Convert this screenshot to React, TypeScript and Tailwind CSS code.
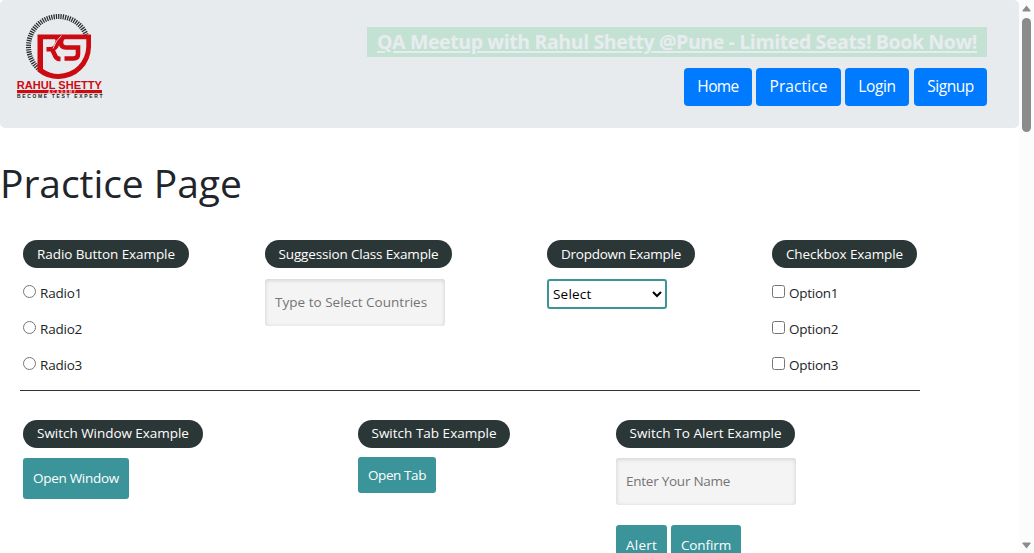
import React from "react";

function Logo() {
  return (
    <svg width="90" height="90" viewBox="15 12 90 90" className="block">
      <path d="M38.200 68.500A30 30 0 0 1 28.500 46.500A30 30 0 0 1 58.500 16.500A30 30 0 0 1 86.200 34.800" fill="none" stroke="#2a2a2a" strokeWidth="5" strokeDasharray="1.250 1.050" />
      <path d="M91 34.600H37.500V71.500A32.500 32.500 0 0 0 58.500 79A32.500 32.500 0 0 0 91 46.500ZM86.300 39.300V46.500A28 28 0 0 1 58.500 74A28 28 0 0 1 43 69V39.300Z" fill="#cc0a12" fillRule="evenodd" />
      <path d="M55 37.500H58.500L57.300 43Q56 49 51 49.200H46.500M52.500 50L55.500 56.500Q57 59 60.500 59" fill="none" stroke="#cc0a12" strokeWidth="4.600" />
      <path d="M64 37.500Q61 38 61 42.500Q61 47.500 66 47.500H78V54Q78 58.500 73.500 58.500H64.500" fill="none" stroke="#cc0a12" strokeWidth="4.600" />
      <path d="M61.500 35.500Q56 40 53 48.500" fill="none" stroke="#e8ebee" strokeWidth=".9" />
      <text x="16.800" y="89" textLength="85.200" lengthAdjust="spacingAndGlyphs" fill="#cc0a12" fontFamily="Liberation Sans, sans-serif" fontWeight="700" fontSize="10.800">RAHUL SHETTY</text>
      <rect x="17" y="90" width="85" height="3.200" fill="#cc0a12" />
      <text x="48" y="93" textLength="28" fill="#f3d5d7" fontFamily="Liberation Sans, sans-serif" fontWeight="700" fontSize="3.600">ACADEMY</text>
      <text x="17" y="98.200" textLength="85.500" fill="#222" fontFamily="Liberation Sans, sans-serif" fontWeight="700" fontSize="5">BECOME TEST EXPERT</text>
    </svg>
  );
}

function Pill({ children, className }: { children: React.ReactNode; className: string }) {
  return (
    <div className={`flex h-7 items-center justify-center whitespace-nowrap rounded-full bg-[#2b3636] text-white ${className}`}>
      <span>{children}</span>
    </div>
  );
}

function Choice({ type, label, className }: { type: "radio" | "checkbox"; label: string; className: string }) {
  return (
    <label className="flex h-9 items-start">
      <input type={type} name={type === "radio" ? "radioButton" : label} className="m-0 mt-[1px] h-[13px] w-[13px] shrink-0" />
      <span className={`ml-1 mt-[-1px] leading-5 ${className}`}>{label}</span>
    </label>
  );
}

const field =
  "block h-[47px] w-[180px] rounded-[3px] border-0 bg-[#f4f4f4] px-[10px] pb-0.5 shadow-[inset_0_1px_4px_rgba(0,0,0,0.16)] placeholder:text-[#757575] placeholder:opacity-100 outline-none";
const navButton = "flex h-[38px] items-center justify-center rounded bg-[#007bff] pb-px text-[15.5px] text-white";
const action = "flex items-center justify-center whitespace-nowrap rounded-[3px] bg-[#3a9499] text-white";

export default function App() {
  return (
    <div className="flex h-[553px] w-[1034px] overflow-hidden bg-white font-['Open_Sans','Noto_Sans',sans-serif] text-[13.5px] font-medium text-[#212529]">
      <div className="h-full w-[1019px] overflow-hidden">
        <header className="flex h-32 items-start justify-between rounded-[5px] bg-[#e8ebee] pl-[15px] pr-8 pt-3">
          <Logo />
          <div className="flex flex-col items-end pt-[15px]">
            <a href="#" className="flex h-[30px] w-[620px] items-center justify-center whitespace-nowrap bg-[#c4e2d4] text-[19.5px] font-bold tracking-[-0.38px] text-[#e9ecef] underline decoration-2 underline-offset-2">
              QA Meetup with Rahul Shetty @Pune - Limited Seats! Book Now!
            </a>
            <nav className="mt-[11px] flex">
              <button className={`${navButton} w-[68px] tracking-[-0.6px]`}>Home</button>
              <button className={`${navButton} ml-1 w-[85px] tracking-[0.1px]`}>Practice</button>
              <button className={`${navButton} ml-1 w-16 tracking-[-0.35px]`}>Login</button>
              <button className={`${navButton} ml-[5px] w-[73px] tracking-[-0.5px]`}>Signup</button>
            </nav>
          </div>
        </header>

        <h1 className="mt-8 h-12 whitespace-nowrap text-[39px] font-normal leading-[46px] tracking-[-0.05px]">Practice Page</h1>

        <main className="ml-5 mt-8 w-[900px]">
          <section className="flex h-[151px] border-b border-[#2b3636] pl-[3px]">
            <div className="w-[242px]">
              <Pill className="w-[166px] tracking-[-0.08px]">Radio Button Example</Pill>
              <div className="mt-4">
                {["Radio1", "Radio2", "Radio3"].map((l) => (
                  <Choice key={l} type="radio" label={l} className="tracking-[-0.2px]" />
                ))}
              </div>
            </div>
            <div className="w-[282px]">
              <Pill className="w-[187px] tracking-[-0.16px]">Suggession Class Example</Pill>
              <input className={`${field} mt-[11px] tracking-[0.02px]`} placeholder="Type to Select Countries" />
            </div>
            <div className="w-[225px]">
              <Pill className="w-[148px] tracking-[-0.26px]">Dropdown Example</Pill>
              <select className="mt-[11px] block h-[30px] w-[120px] rounded-[3px] border-2 border-[#3a9499] bg-white pb-px tracking-[0.2px] text-black">
                <option>Select</option>
                <option>Option1</option>
                <option>Option2</option>
                <option>Option3</option>
              </select>
            </div>
            <div>
              <Pill className="w-[145px] tracking-[-0.1px]">Checkbox Example</Pill>
              <div className="mt-4">
                {["Option1", "Option2", "Option3"].map((l) => (
                  <Choice key={l} type="checkbox" label={l} className="tracking-[-0.27px]" />
                ))}
              </div>
            </div>
          </section>

          <section className="flex pl-[3px] pt-[29px]">
            <div className="w-[335px]">
              <Pill className="w-[180px] pb-px tracking-[-0.04px]">Switch Window Example</Pill>
              <button className={`${action} mt-[10px] h-[41px] w-[106px] pb-px tracking-[-0.3px]`}>Open Window</button>
            </div>
            <div className="w-[258px]">
              <Pill className="w-[152px] pb-px tracking-[0.01px]">Switch Tab Example</Pill>
              <button className={`${action} mt-[9px] h-9 w-[78px] tracking-[-0.4px]`}>Open Tab</button>
            </div>
            <div>
              <Pill className="w-[179px] pb-px tracking-[0.07px]">Switch To Alert Example</Pill>
              <input className={`${field} mt-[10px] tracking-[-0.25px]`} placeholder="Enter Your Name" />
              <div className="mt-5 flex gap-1">
                <button className={`${action} h-[41px] w-[51px] pb-px tracking-[0.2px]`}>Alert</button>
                <button className={`${action} h-[41px] w-[70px] pb-px tracking-[-0.1px]`}>Confirm</button>
              </div>
            </div>
          </section>
        </main>
      </div>

      <div className="flex h-full w-[15px] flex-col items-center bg-[#fcfcfc]">
        <svg width="9" height="7" viewBox="0 0 9 7" className="mt-[5px]">
          <path d="M4.500 .5L8.500 5.500Q8.700 6.500 8 6.500H1Q.3 6.500 .5 5.500Z" fill="#8b8b8b" />
        </svg>
        <div className="mt-[6px] h-[114px] w-[9px] rounded-full bg-[#8b8b8b]" />
        <svg width="9" height="7" viewBox="0 0 9 7" className="mb-1 mt-auto">
          <path d="M4.500 6.500L8.500 1.500Q8.700 .5 8 .5H1Q.3 .5 .5 1.500Z" fill="#8b8b8b" />
        </svg>
      </div>
    </div>
  );
}
